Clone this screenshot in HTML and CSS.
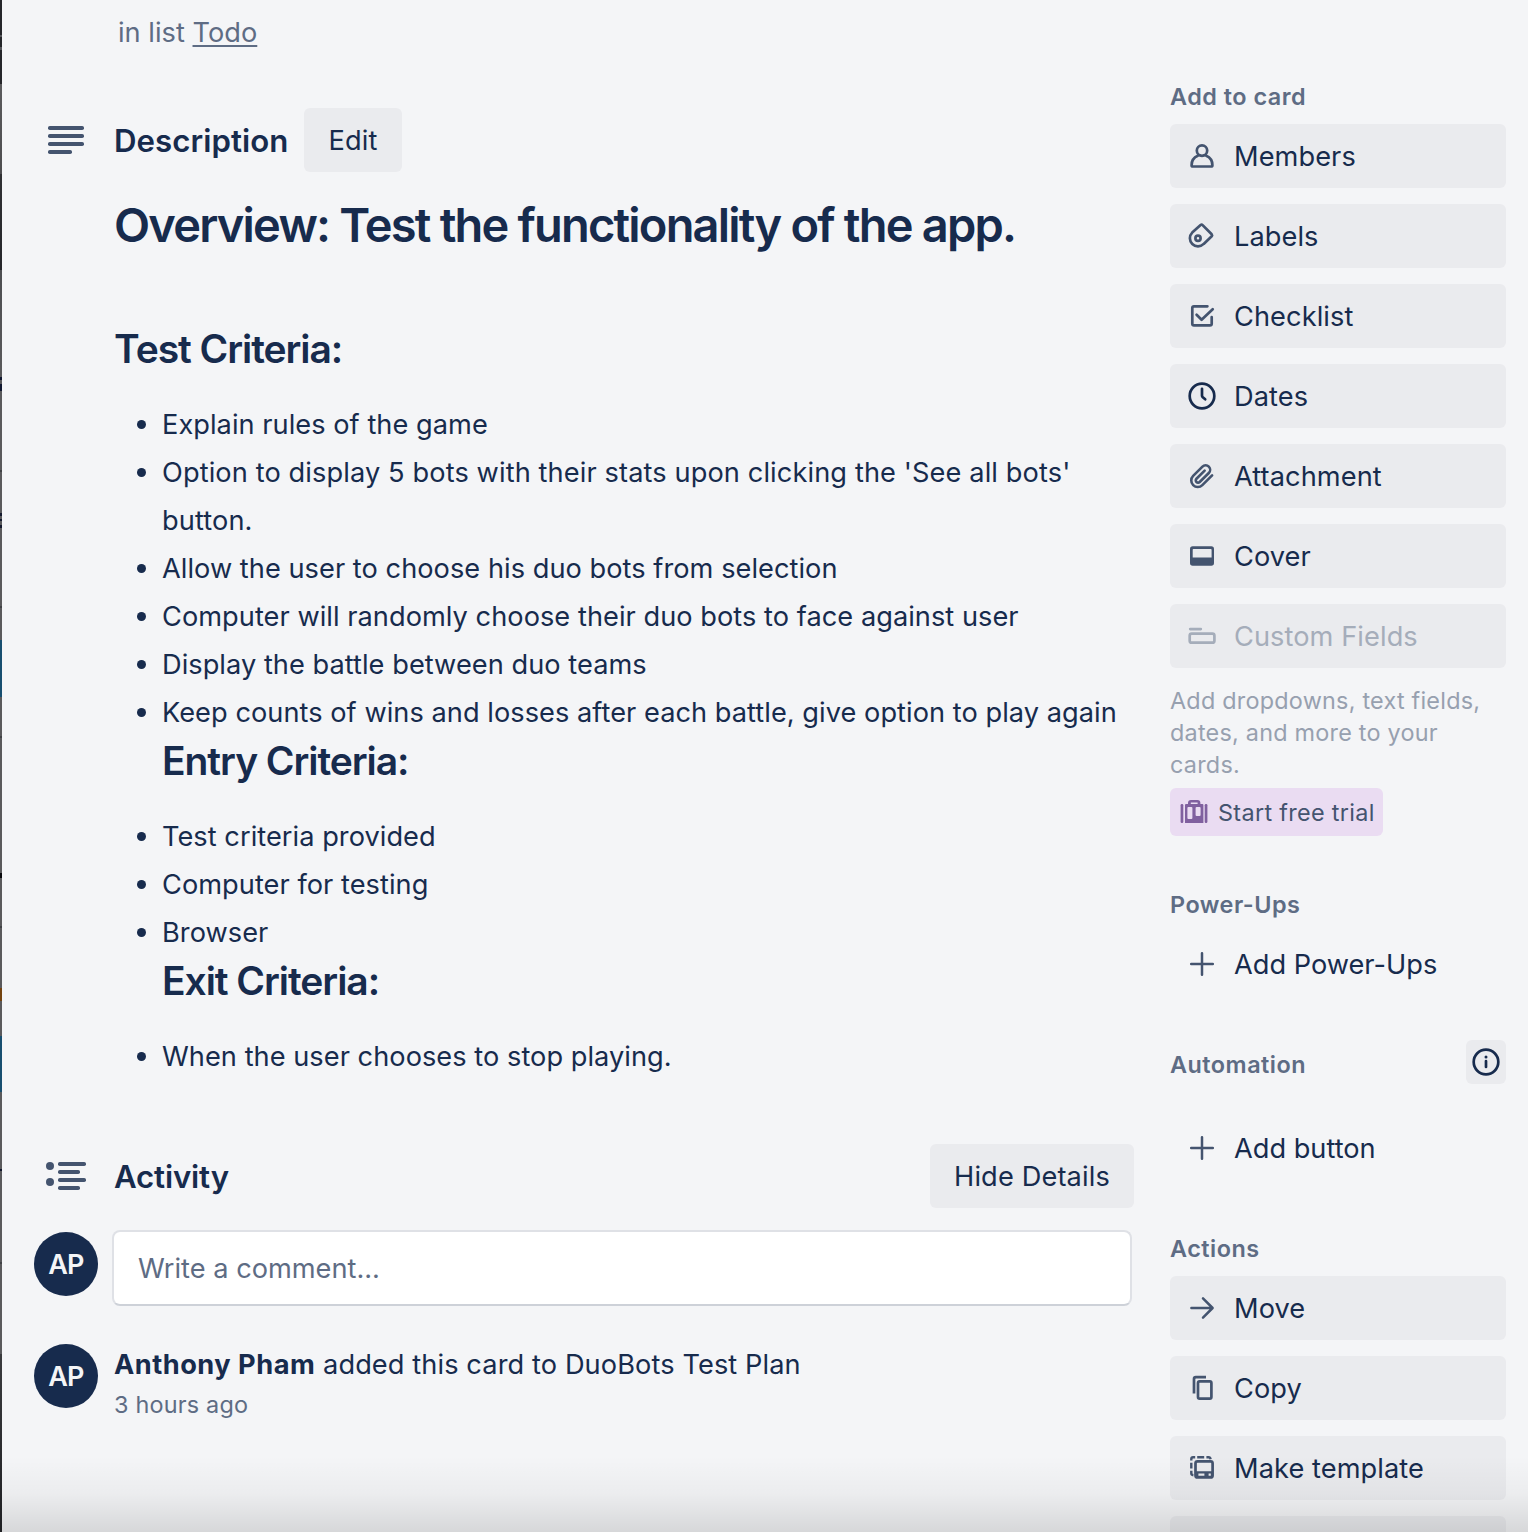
FILE: index.html
```html
<!DOCTYPE html>
<html lang="en">
<head>
<meta charset="utf-8">
<title>DuoBots Test Plan</title>
<link rel="stylesheet" href="styles.css">
</head>
<body>
<div class="page">
  <div class="board-edge"></div>
  <main class="main">
    <p class="in-list">in list <a class="list-link">Todo</a></p>

    <section class="description">
      <header class="section-head">
        <svg class="section-icon" viewBox="0 0 48 48"><g fill="#44546f"><rect x="6" y="10" width="36" height="4" rx="1.8"/><rect x="6" y="18" width="36" height="4" rx="1.8"/><rect x="6" y="26" width="36" height="4" rx="1.8"/><rect x="6" y="34" width="24" height="4" rx="1.8"/></g></svg>
        <h3 class="section-title">Description</h3>
        <button class="btn edit">Edit</button>
      </header>
      <div class="markdown">
        <h1>Overview: Test the functionality of the app.</h1>
        <h2>Test Criteria:</h2>
        <ul>
          <li>Explain rules of the game</li>
          <li class="loose">Option to display 5 bots with their stats upon clicking the 'See all bots' button.</li>
          <li>Allow the user to choose his duo bots from selection</li>
          <li>Computer will randomly choose their duo bots to face against user</li>
          <li>Display the battle between duo teams</li>
          <li>Keep counts of wins and losses after each battle, give option to play again<h2>Entry Criteria:</h2></li>
          <li>Test criteria provided</li>
          <li>Computer for testing</li>
          <li>Browser<h2>Exit Criteria:</h2></li>
          <li>When the user chooses to stop playing.</li>
        </ul>
      </div>
    </section>

    <section class="activity">
      <header class="section-head">
        <svg class="section-icon" viewBox="0 0 48 48"><g fill="#44546f"><circle cx="8" cy="14" r="4"/><circle cx="8" cy="30" r="4"/><rect x="16" y="10" width="28" height="4" rx="1.8"/><rect x="16" y="18" width="22" height="4" rx="1.8"/><rect x="16" y="26" width="28" height="4" rx="1.8"/><rect x="16" y="34" width="22" height="4" rx="1.8"/></g></svg>
        <h3 class="section-title activity-title">Activity</h3>
        <button class="btn hide">Hide Details</button>
      </header>
      <div class="comment-row">
        <span class="avatar">AP</span>
        <div class="comment-box">Write a comment...</div>
      </div>
      <div class="entry">
        <span class="avatar">AP</span>
        <div class="entry-body">
          <p class="entry-text"><b>Anthony Pham</b> added this card to DuoBots Test Plan</p>
          <p class="entry-time">3 hours ago</p>
        </div>
      </div>
    </section>
  </main>

  <aside class="sidebar">
    <h4 class="side-title">Add to card</h4>
    <div class="stack">
      <a class="side-btn"><svg class="icon" viewBox="0 0 32 32"><circle cx="16" cy="10.6" r="5.2"/><path d="M11.8 15.8C8 17.4 5.6 20.8 5.6 25.2Q5.6 26.5 6.9 26.5H25.1Q26.4 26.5 26.4 25.2C26.4 20.8 24 17.4 20.2 15.8"/></svg>Members</a>
      <a class="side-btn"><svg class="icon" viewBox="0 0 32 32"><path d="M14.6 5.1L6.2 12.6A8 8 0 1 0 17.7 23.9L25.7 16.3Q26.6 15.3 25.7 14.3L16.6 5.1Q15.6 4.1 14.6 5.1Z"/><circle cx="12" cy="18.3" r="2.6"/></svg>Labels</a>
      <a class="side-btn"><svg class="icon" viewBox="0 0 32 32"><path d="M21.4 6.3H8Q6.3 6.3 6.3 8V23.7Q6.3 25.4 8 25.4H24Q25.7 25.4 25.7 23.7V17.2M10.6 14.8L15.6 19.8L26.7 9.2"/></svg>Checklist</a>
      <a class="side-btn"><svg class="icon dark" viewBox="0 0 32 32"><circle cx="16" cy="16" r="12.3"/><path d="M16 8.8V15.6Q16 16.4 16.5 17L19.2 19.3"/></svg>Dates</a>
      <a class="side-btn"><svg class="icon" viewBox="0 0 32 32"><g transform="translate(3.1 3.2) scale(1.08)"><path stroke-width="2.4" d="M21.3 11.2L12.25 20.24a6 6 0 0 1-8.49-8.49l8.6-8.6a4.1 4.1 0 0 1 5.9 5.9L9.8 17.4a2.1 2.1 0 0 1-3-3l7.6-7.5"/></g></svg>Attachment</a>
      <a class="side-btn"><svg class="icon solid" viewBox="0 0 32 32"><path fill-rule="evenodd" d="M6.7 6.3H25.3Q28 6.3 28 9V23Q28 25.7 25.3 25.7H6.7Q4 25.7 4 23V9Q4 6.3 6.7 6.3ZM7.4 9H24.9Q25.6 9 25.6 9.7V17.6H6.7V9.7Q6.7 9 7.4 9Z"/></svg>Cover</a>
      <a class="side-btn disabled"><svg class="icon" viewBox="0 0 32 32"><path d="M4.2 9.1H14.8"/><rect x="3.7" y="13.7" width="24.7" height="9" rx="2"/></svg>Custom Fields</a>
    </div>
    <p class="hint">Add dropdowns, text fields, dates, and more to your cards.</p>
    <a class="trial"><svg class="trial-icon" viewBox="0 0 28 24"><g fill="#80609f"><rect x=".6" y="4" width="2.7" height="19" rx="1.2"/><rect x="24.7" y="4" width="2.7" height="19" rx="1.2"/><path fill-rule="evenodd" d="M5 5Q5 4 6 4H8V3Q8 0 11 0H17.4Q20.4 0 20.4 3V4H22.4Q23.4 4 23.4 5V23H5ZM10.8 2.4V4H17.6V2.4ZM8.4 7Q7.4 7 7.4 8V18Q7.4 19 8.4 19H11.4Q12.4 19 12.4 18V8Q12.4 7 11.4 7ZM16.6 7Q15.6 7 15.6 8V15Q15.6 16 16.6 16H19.6Q20.6 16 20.6 15V8Q20.6 7 19.6 7Z"/></g></svg>Start free trial</a>

    <h4 class="side-title power">Power-Ups</h4>
    <a class="side-btn plain"><svg class="icon" viewBox="0 0 32 32"><path stroke-width="2.5" d="M16 5.2V26.8M5.2 16H26.8"/></svg>Add Power-Ups</a>

    <div class="automation">
      <h4 class="side-title">Automation</h4>
      <span class="info"><svg class="info-icon" viewBox="0 0 32 32"><circle cx="16" cy="16" r="12.3"/><path d="M16 15V21"/><circle class="dot" cx="16" cy="10.9" r="1.5"/></svg></span>
    </div>
    <a class="side-btn plain add-button"><svg class="icon" viewBox="0 0 32 32"><path stroke-width="2.5" d="M16 5.2V26.8M5.2 16H26.8"/></svg>Add button</a>

    <h4 class="side-title actions">Actions</h4>
    <div class="stack">
      <a class="side-btn"><svg class="icon" viewBox="0 0 32 32"><path stroke-width="2.5" d="M5.4 16H26.4M17 6.4L26.6 16L17 25.6"/></svg>Move</a>
      <a class="side-btn"><svg class="icon" viewBox="0 0 32 32"><path stroke-linecap="butt" d="M8 21.6V7Q8 5.2 9.8 5.2H20"/><rect x="12" y="9.3" width="13.4" height="17.4" rx="1.6"/></svg>Copy</a>
      <a class="side-btn"><svg class="icon" viewBox="0 0 32 32"><path stroke-width="2.4" stroke-linecap="butt" d="M5.3 8.4V7Q5.3 5.3 7 5.3H9.2M11.2 5.3H18.2M20.4 5.3H22.6Q24.3 5.3 24.6 7.2M5.3 10.8V16.4M5.3 18.8V21.4Q5.4 23 7.4 23.2"/><rect x="9.5" y="9.3" width="17.1" height="16.2" rx="2"/><path class="fill" fill-rule="evenodd" d="M9 19.2H27V26H9ZM12.4 21.6V23.8H18.4V21.6ZM22.6 21.6V23.8H24.8V21.6Z"/></svg>Make template</a>
      <a class="side-btn"></a>
    </div>
  </aside>
  <div class="fade"></div>
</div>
</body>
</html>
```
FILE: styles.css
```css
* { box-sizing: border-box; margin: 0; padding: 0; }

body {
  background: #f4f5f7;
  color: #172b4d;
  font-family: Inter, "Liberation Sans", sans-serif;
  font-size: 27.2px;
  line-height: 40px;
  letter-spacing: 0.04px;
}

.page {
  position: relative;
  display: grid;
  grid-template-columns: 2px 1132px 336px;
  height: 1532px;
  overflow: hidden;
}

/* Sliver of the dimmed board behind the card window */
.board-edge {
  background: linear-gradient(
    #25262a 0 35px, #55565a 35px 37px, #25262a 37px 47px, #55565a 47px 50px, #25262a 50px 84px,
    #5b5b5d 84px, #4d4d4f 174px, #303134 174px, #25262a 270px,
    #4d4e51 270px, #5a5a5c 377px, #111830 377px 380px, #5a5a5c 380px 384px, #111830 384px 391px,
    #5a5a5c 391px 470px, #414245 470px 472px, #5a5a5c 472px 513px, #151a2e 513px 516px,
    #5a5a5c 516px 519px, #151a2e 519px 521px, #5a5a5c 521px 525px, #151a2e 525px 528px,
    #5a5a5c 528px 606px, #414245 606px 608px,
    #5a5a5c 608px 640px, #174f70 640px 697px, #5a5a5c 697px 736px, #414245 736px 738px,
    #5a5a5c 738px 873px, #08090c 873px 878px, #5a5a5c 878px 926px, #414245 926px 928px,
    #5a5a5c 928px 988px, #74430f 988px 1001px, #5a5a5c 1001px 1036px, #174f70 1036px 1092px,
    #5a5a5c 1092px 1169px, #10152a 1169px 1171px, #5a5a5c 1171px 1262px, #414245 1262px 1264px,
    #5a5a5c 1264px 1354px, #3a3b3e 1354px, #1f2023 1532px);
}

.main { padding-left: 30px; }

.in-list {
  margin: 13px 0 0 86px;
  color: #5e6c84;
  letter-spacing: 0.02px;
}
.list-link {
  text-decoration: underline;
  text-decoration-thickness: 2px;
  text-underline-offset: 3px;
}

.section-head { display: flex; align-items: center; height: 64px; }
.section-icon { width: 48px; height: 48px; margin: 0 24px 0 10px; }
.section-title { padding-top: 2px; font-size: 31.2px; font-weight: 600; letter-spacing: 0.05px; }
.activity-title { letter-spacing: -0.15px; }

.btn {
  height: 64px;
  padding-top: 2px;
  border: 0;
  border-radius: 6px;
  background: #eaebee;
  color: #172b4d;
  font: inherit;
  letter-spacing: 0.14px;
}
.edit { width: 98px; margin-left: 15.6px; }
.hide { width: 204px; margin-left: auto; }

.description { margin-top: 55px; }
.markdown { padding-left: 82px; }
.markdown h1 {
  margin-top: 23px;
  font-size: 47px;
  font-weight: 600;
  line-height: 60px;
  letter-spacing: -1.8px;
  white-space: nowrap;
}
.markdown h2 {
  font-size: 39px;
  font-weight: 600;
  line-height: 50px;
  letter-spacing: -1.05px;
}
.markdown > h2 { margin-top: 69px; }
.markdown ul {
  margin: 27px -10px 0 0;
  padding-left: 48px;
  list-style: none;
}
.markdown li { line-height: 48px; }
.markdown li::before {
  content: "";
  float: left;
  width: 9px;
  height: 9px;
  margin: 19px 0 0 -25px;
  border-radius: 50%;
  background: #172b4d;
}
.markdown li.loose { letter-spacing: 0.11px; }
.markdown li h2 { margin-top: -1px; padding-bottom: 27px; }

.activity { margin-top: 63px; }
.avatar {
  display: flex;
  flex: none;
  align-items: center;
  justify-content: center;
  width: 64px;
  height: 64px;
  margin-left: 2px;
  padding-top: 1px;
  border-radius: 50%;
  background: #172b4d;
  color: #f4f5f7;
  font-size: 27px;
  font-weight: 600;
  letter-spacing: -0.7px;
}
.comment-row { display: flex; gap: 14px; margin-top: 24px; }
.comment-box {
  width: 1020px;
  height: 76px;
  margin-top: -2px;
  padding: 17px 24px 0;
  border: 2px solid #dfe1e6;
  border-bottom-color: #cdd1d8;
  border-radius: 8px;
  background: #fff;
  color: #5e6c84;
  letter-spacing: 0;
}
.entry { display: flex; gap: 16px; margin-top: 38px; }
.entry-body { padding-top: 1px; }
.entry-text { letter-spacing: 0.1px; }
.entry-text b { font-weight: 700; letter-spacing: 0.5px; }
.entry-time { color: #5e6c84; font-size: 23.4px; letter-spacing: 0.2px; }

.sidebar { padding-top: 80px; margin-left: 36px; width: 336px; }
.side-title {
  color: #5e6c84;
  font-size: 23.4px;
  font-weight: 600;
  line-height: 34px;
  letter-spacing: 0.5px;
}
.stack { display: flex; flex-direction: column; gap: 16px; margin-top: 10px; }
.side-btn {
  display: flex;
  flex: none;
  align-items: center;
  gap: 16px;
  height: 64px;
  padding: 2px 0 0 16px;
  border-radius: 6px;
  background: #eaebee;
  letter-spacing: 0.08px;
}
.side-btn.plain { background: none; letter-spacing: 0; }
.side-btn.disabled { color: #a5adba; }
.icon, .info-icon {
  width: 32px;
  height: 32px;
  fill: none;
  stroke: #44546f;
  stroke-width: 2.7;
  stroke-linecap: round;
  stroke-linejoin: round;
}
.side-btn .icon { margin-top: -2px; }
.icon.dark, .info-icon { stroke: #172b4d; }
.icon.solid { fill: #44546f; stroke: none; }
.icon .fill { fill: #44546f; stroke: none; }
.disabled .icon { stroke: #a5adba; }

.hint {
  margin-top: 17px;
  color: #97a0af;
  font-size: 23.4px;
  line-height: 32px;
  letter-spacing: 0.23px;
}
.trial {
  display: flex;
  align-items: center;
  gap: 10px;
  width: 213px;
  height: 48px;
  margin-top: 7px;
  padding: 2px 0 0 10px;
  border-radius: 6px;
  background: #eadcf2;
  color: #44546f;
  font-size: 23.4px;
  letter-spacing: 0.33px;
}
.trial-icon { width: 28px; height: 24px; margin-top: -2px; }

.power { margin: 52px 0 10px; }
.automation { display: flex; justify-content: space-between; margin-top: 44px; }
.automation .side-title { margin-top: 8px; }
.info {
  display: flex;
  align-items: center;
  justify-content: center;
  width: 40px;
  height: 44px;
  border-radius: 6px;
  background: #eaebee;
}
.info-icon .dot { fill: #172b4d; stroke: none; }
.add-button { margin-top: 32px; }
.actions { margin-top: 52px; }

/* Shade over the bottom of the scrolling window */
.fade {
  position: absolute;
  left: 2px;
  right: 0;
  bottom: 0;
  height: 76px;
  background: linear-gradient(rgba(0, 0, 0, 0), rgba(0, 0, 0, 0.035) 50%, rgba(0, 0, 0, 0.12));
}
```
